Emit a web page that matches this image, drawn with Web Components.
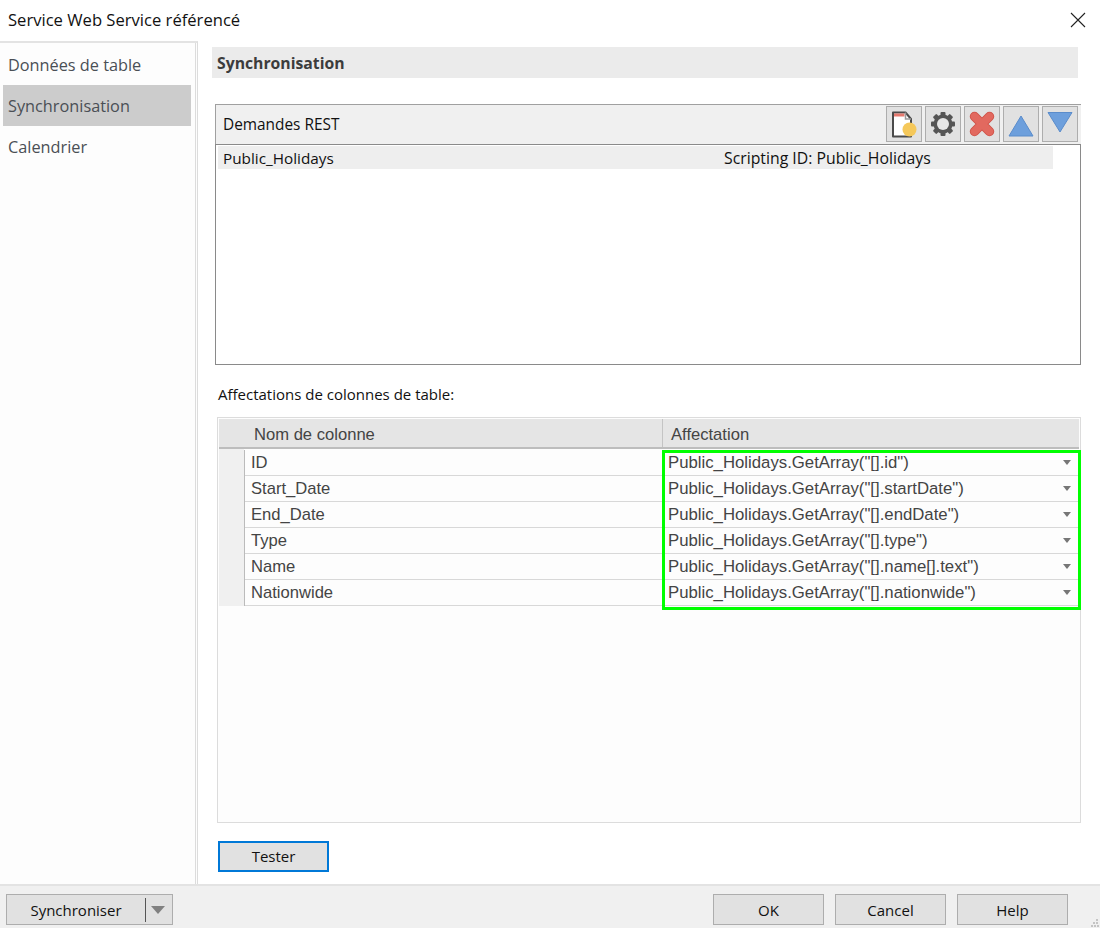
<!DOCTYPE html>
<html lang="fr"><head><meta charset="utf-8"><title>Service Web Service référencé</title>
<style>html,body{margin:0;padding:0;background:#fff}body{width:1100px;height:928px;overflow:hidden;font-family:"Open Sans","Noto Sans",sans-serif}</style>
</head><body>
<ws-dialog>
  <side-nav slot="nav">
    <nav-item>Données de table</nav-item>
    <nav-item selected>Synchronisation</nav-item>
    <nav-item>Calendrier</nav-item>
  </side-nav>
  <section-title slot="main">Synchronisation</section-title>
  <rest-panel slot="main" label="Demandes REST" name="Public_Holidays" sid="Scripting ID: Public_Holidays">
    <tool-btn slot="tools"><svg viewBox="0 0 36 36" width="36" height="36"><path d="M7 6.500h12.500l5.500 6.500v17.500H7z" fill="#fff" stroke="#4a4a4a" stroke-width="2" stroke-linejoin="round"/><path d="M8 7.500h10.500v3H8z" fill="#e5796f"/><path d="M19.500 6.500v6.500h5.500" fill="none" stroke="#9a9a9a" stroke-width="1.500"/><circle cx="23.500" cy="23.500" r="7" fill="#f5c85a"/></svg></tool-btn>
    <tool-btn slot="tools"><svg viewBox="0 0 36 36" width="36" height="36"><g fill="#555"><rect x="15.500" y="6" width="5" height="24" rx="1"/><rect x="15.500" y="6" width="5" height="24" rx="1" transform="rotate(45 18 18)"/><rect x="15.500" y="6" width="5" height="24" rx="1" transform="rotate(90 18 18)"/><rect x="15.500" y="6" width="5" height="24" rx="1" transform="rotate(135 18 18)"/><circle cx="18" cy="18" r="9.500"/></g><circle cx="18" cy="18" r="6" fill="#e6e6e6"/></svg></tool-btn>
    <tool-btn slot="tools"><svg viewBox="0 0 36 36" width="36" height="36"><path d="M10.500 10.500L25.500 25.500M25.500 10.500L10.500 25.500" stroke="#cf5449" stroke-width="9.500" stroke-linecap="round"/><path d="M10.500 10.500L25.500 25.500M25.500 10.500L10.500 25.500" stroke="#e2695f" stroke-width="7.500" stroke-linecap="round"/></svg></tool-btn>
    <tool-btn slot="tools"><svg viewBox="0 0 36 36" width="36" height="36"><path d="M18 10L30 30H6z" fill="#6d9fdc" stroke="#5a8ccb" stroke-width="1"/></svg></tool-btn>
    <tool-btn slot="tools"><svg viewBox="0 0 36 36" width="36" height="36"><path d="M6 6.500h24L18 26z" fill="#6d9fdc" stroke="#5a8ccb" stroke-width="1"/></svg></tool-btn>
  </rest-panel>
  <field-label slot="main">Affectations de colonnes de table:</field-label>
  <map-table slot="main" col1="Nom de colonne" col2="Affectation">
    <map-row name="ID" value='Public_Holidays.GetArray("[].id")'></map-row>
    <map-row name="Start_Date" value='Public_Holidays.GetArray("[].startDate")'></map-row>
    <map-row name="End_Date" value='Public_Holidays.GetArray("[].endDate")'></map-row>
    <map-row name="Type" value='Public_Holidays.GetArray("[].type")'></map-row>
    <map-row name="Name" value='Public_Holidays.GetArray("[].name[].text")'></map-row>
    <map-row name="Nationwide" value='Public_Holidays.GetArray("[].nationwide")'></map-row>
  </map-table>
  <dlg-button slot="main" focused style="margin:18px 0 0 6px">Tester</dlg-button>
  <split-button slot="left">Synchroniser</split-button>
  <dlg-button slot="right">OK</dlg-button>
  <dlg-button slot="right">Cancel</dlg-button>
  <dlg-button slot="right">Help</dlg-button>
</ws-dialog>
<script>
const FONT='"Open Sans","Noto Sans",sans-serif';
const ARIAL='"Liberation Sans",Arial,sans-serif';
class Base extends HTMLElement{
  constructor(){super();this.attachShadow({mode:'open'});}
  connectedCallback(){this.shadowRoot.innerHTML=this.render();}
  a(n){return (this.getAttribute(n)||'').replace(/&/g,'&amp;').replace(/"/g,'&quot;').replace(/</g,'&lt;');}
}
customElements.define('ws-dialog',class extends Base{render(){return `<style>
:host{display:flex;flex-direction:column;width:1100px;height:928px;background:#fff;color:#111;font-family:${FONT}}
.title{height:41px;flex:none;display:flex;align-items:center;justify-content:space-between;padding:0 14px 2px 8px;box-sizing:border-box;font-size:16.600px}
.title svg{display:block}
.body{flex:1;display:flex;min-height:0}
.nav{width:198px;flex:none;box-sizing:border-box;border-top:2px solid #e3e3e3;border-right:1px solid #dcdcdc;background:#fdfdfd}
.navin{height:100%;box-sizing:border-box;width:196px;border-right:1px solid #dcdcdc}
.main{flex:1;min-width:0;display:flex;flex-direction:column;padding:6px 22px 0 14px}
.foot{height:44px;flex:none;box-sizing:border-box;border-top:2px solid #e3e3e3;background:#f0f0f0;display:flex;justify-content:space-between;align-items:flex-start;padding:8px 32px 0 6px;position:relative}
.right{display:flex;gap:11px}
.grip{position:absolute;right:1px;bottom:1px}
</style>
<div class="title"><span>Service Web Service référencé</span><svg width="16" height="16" viewBox="0 0 16 16"><path d="M1 1L15 15M15 1L1 15" stroke="#222" stroke-width="1.100" fill="none"/></svg></div>
<div class="body"><div class="nav"><div class="navin"><slot name="nav"></slot></div></div><div class="main"><slot name="main"></slot></div></div>
<div class="foot"><div><slot name="left"></slot></div><div class="right"><slot name="right"></slot></div>
<svg class="grip" width="8" height="8" viewBox="0 0 8 8" fill="#c4c4c4"><rect x="5" y="0" width="2" height="2"/><rect x="2" y="3" width="2" height="2"/><rect x="5" y="3" width="2" height="2"/><rect x="0" y="6" width="2" height="2"/><rect x="3" y="6" width="2" height="2"/><rect x="6" y="6" width="2" height="2"/></svg></div>`}});
customElements.define('side-nav',class extends Base{render(){return `<style>:host{display:flex;flex-direction:column;padding:1px 4px 0 3px}</style><slot></slot>`}});
customElements.define('nav-item',class extends Base{render(){return `<style>
:host{display:flex;align-items:center;height:41px;box-sizing:border-box;padding:0 0 0 5px;font-size:16.300px;color:#4a4f55}
:host([selected]){background:#ccc}
</style><slot></slot>`}});
customElements.define('section-title',class extends Base{render(){return `<style>
:host{display:flex;align-items:center;height:31px;flex:none;box-sizing:border-box;padding:0 0 0 5px;background:#ebebeb;font-size:15.750px;font-weight:700;color:#3c3c3c}
</style><slot></slot>`}});
customElements.define('tool-btn',class extends Base{render(){return `<style>
:host{display:block;width:36px;height:36px;box-sizing:border-box;background:#e1e1e1;border:1px solid #adadad;overflow:hidden}
::slotted(svg){display:block;margin:-1px}
</style><slot></slot>`}});
customElements.define('rest-panel',class extends Base{render(){return `<style>
:host{display:block;flex:none;margin:26px -3px 0 3px;height:261px;font-family:${FONT}}
.head{height:40px;box-sizing:border-box;background:#f0f0f0;border:1px solid #a0a0a0;border-bottom:0;border-right:0;display:flex;align-items:flex-start;justify-content:space-between;padding:1px 3px 0 7px}
.label{font-size:15.400px;line-height:37px;color:#111}
.tools{display:flex;gap:3px}
.list{height:221px;box-sizing:border-box;border:1px solid #8a8a8a;background:#fff;padding:1px 27px 0 2px}
.row{height:23px;background:#eee;display:flex;align-items:center;font-size:15.300px;color:#111;padding-left:5px}
.row span:first-child{width:501px}
.row span:last-child{font-size:15.800px}
</style><div class="head"><span class="label">${this.a('label')}</span><div class="tools"><slot name="tools"></slot></div></div>
<div class="list"><div class="row"><span>${this.a('name')}</span><span>${this.a('sid')}</span></div></div>`}});
customElements.define('field-label',class extends Base{render(){return `<style>
:host{display:block;flex:none;margin:18px 0 0 6px;height:22px;line-height:22px;font-size:15px;color:#111}
</style><slot></slot>`}});
customElements.define('map-row',class extends Base{render(){return ''}});
customElements.define('map-table',class extends Base{render(){
  const rows=[...this.querySelectorAll('map-row')];
  const esc=s=>s.replace(/&/g,'&amp;').replace(/</g,'&lt;');
  return `<style>
:host{display:block;flex:none;margin:12px -3px 0 5px;height:406px;box-sizing:border-box;border:1px solid #dcdcdc;padding:1px;background:#fdfdfd;font-family:${ARIAL};font-size:16.600px;color:#444}
.head{display:flex;height:30px;box-sizing:border-box;background:#e5e5e5;border-bottom:2px solid #bdbdbd;padding-top:2px;line-height:28px}
.h1{width:444px;box-sizing:border-box;padding-left:35px;border-right:1px solid #c4c4c4;margin-top:-2px;padding-top:2px}
.h2{padding-left:8px}
.grid{display:flex;align-items:flex-start}
.gut{width:25px;height:157px;background:#f0f0f0;flex:none;box-sizing:border-box}
.left{width:418px;flex:none;margin-top:1px;border-left:1px solid #bbb;box-sizing:border-box}
.cell{height:26px;box-sizing:border-box;border-bottom:1px solid #d8d8d8;line-height:25px;padding-left:6px;white-space:nowrap}
.right{flex:1;min-width:0;margin:1px -2px 0 0;border:3px solid #00ff00;padding-bottom:1px;font-size:16.750px}
.right .cell{display:flex;justify-content:space-between;align-items:center;padding:0 7px 1px 3px}
.right .cell:first-child{height:23px;padding-bottom:3px}
svg{display:block}
</style><div class="head"><div class="h1">${this.a('col1')}</div><div class="h2">${this.a('col2')}</div></div>
<div class="grid"><div class="gut"></div><div class="left">${rows.map(r=>`<div class="cell">${esc(r.getAttribute('name'))}</div>`).join('')}</div>
<div class="right">${rows.map(r=>`<div class="cell"><span>${esc(r.getAttribute('value'))}</span><svg width="8" height="5" viewBox="0 0 8 5"><path d="M0 0h8L4 5z" fill="#777"/></svg></div>`).join('')}</div></div>`}});
customElements.define('dlg-button',class extends Base{render(){return `<style>
:host{display:flex;align-items:center;justify-content:center;flex:none;width:111px;height:31px;box-sizing:border-box;background:#e1e1e1;border:1px solid #adadad;font-size:15px;color:#111;font-family:${FONT}}
:host([focused]){border:2px solid #0078d7;padding-bottom:1px}
</style><slot></slot>`}});
customElements.define('split-button',class extends Base{render(){return `<style>
:host{display:flex;align-items:center;width:167px;height:31px;box-sizing:border-box;background:#e1e1e1;border:1px solid #adadad;font-size:15px;color:#111;font-family:${FONT}}
.t{width:138px;text-align:center}
.s{height:24px;background:#fff;border-left:1px solid #555;width:0}
svg{display:block;margin-left:5px}
</style><span class="t"><slot></slot></span><span class="s"></span><svg width="14" height="8" viewBox="0 0 14 8"><path d="M0 0h14L7 8z" fill="#808080"/></svg>`}});
</script>
</body></html>
